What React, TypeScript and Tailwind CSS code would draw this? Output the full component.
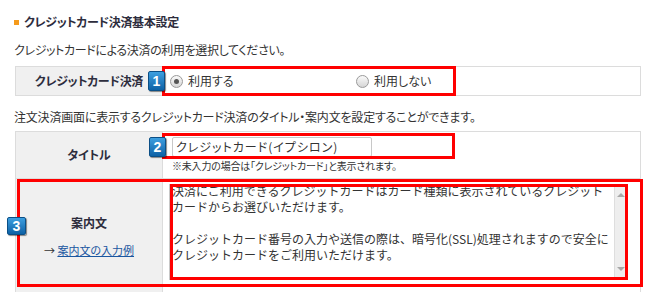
import React from 'react';

function Badge({ n, className }: { n: string; className: string }) {
  return (
    <div
      className={`absolute flex items-center justify-center rounded-[2px] border border-[#0b4f86] bg-gradient-to-b from-[#3d9fe0] to-[#0c62a6] text-[14px] leading-none font-bold text-white shadow-[1px_1px_1px_rgba(0,0,0,0.45)] font-['Liberation_Sans',sans-serif] ${className}`}
    >
      {n}
    </div>
  );
}

function Radio({ checked }: { checked?: boolean }) {
  return (
    <span className="flex h-[13px] w-[13px] items-center justify-center rounded-full border border-[#9a9a9a] bg-gradient-to-b from-[#fafafa] to-[#d6d6d6]">
      {checked && <span className="h-[5px] w-[5px] rounded-full bg-[#555]" />}
    </span>
  );
}

export default function App() {
  return (
    <div className="relative h-[292px] w-[656px] overflow-hidden bg-white text-[#333] font-['Noto_Sans_CJK_JP',sans-serif] [font-feature-settings:'palt']">
      {/* 見出し */}
      <div className="flex items-center pl-[14px] pt-[14px] leading-[16px]">
        <span className="h-[5px] w-[5px] bg-[#f59a1b]" />
        <span className="ml-[5px] text-[12px] font-bold tracking-[-0.3px] text-[#2d2d3d]">クレジットカード決済基本設定</span>
      </div>

      <p className="mt-[12px] pl-[14px] text-[12px] leading-[16px] tracking-[-0.35px]">クレジットカードによる決済の利用を選択してください。</p>

      {/* 決済利用 */}
      <div className="mx-[15px] mt-[8px] flex h-[30px] border border-[#dcdcdc] text-[12px]">
        <div className="flex w-[147px] items-center justify-center border-r border-[#dcdcdc] bg-[#f0f0f0] font-bold tracking-[-0.3px] text-[#2d2d3d]">
          クレジットカード決済
        </div>
        <div className="flex items-center pl-[7px]">
          <label className="flex w-[186px] items-center gap-[5px]">
            <Radio checked />
            <span>利用する</span>
          </label>
          <label className="flex items-center gap-[5px]">
            <Radio />
            <span>利用しない</span>
          </label>
        </div>
      </div>

      <p className="mt-[13px] pl-[14px] text-[12px] leading-[16px] tracking-[-0.2px]">
        注文決済画面に表示するクレジットカード決済のタイトル・案内文を設定することができます。
      </p>

      {/* タイトル・案内文 */}
      <div className="mx-[15px] mt-[6px] border border-[#dcdcdc] text-[12px]">
        <div className="flex h-[46px]">
          <div className="flex w-[147px] items-center justify-center border-r border-[#dcdcdc] bg-[#f0f0f0] font-bold text-[#2d2d3d]">
            タイトル
          </div>
          <div className="pl-[9px] pt-[5px]">
            <div className="flex h-[20px] w-[200px] items-center rounded-[2px] border border-[#c8c8c8] px-[3px] text-[12px] leading-none tracking-[1px]">
              クレジットカード(イプシロン)
            </div>
            <p className="mt-[2px] text-[10px] leading-[14px] tracking-[-0.2px]">※未入力の場合は「クレジットカード」と表示されます。</p>
          </div>
        </div>
        <div className="flex h-[130px] border-t border-[#dcdcdc]">
          <div className="flex w-[147px] flex-col items-center border-r border-[#dcdcdc] bg-[#f0f0f0] pt-[36px]">
            <span className="font-bold leading-[16px] text-[#2d2d3d]">案内文</span>
            <span className="mt-[11px] text-[11px] leading-[16px]">
              → <a className="text-[#1a56a0] underline">案内文の入力例</a>
            </span>
          </div>
          <div className="pl-[6px] pt-[5px]">
            <div className="flex h-[96px] w-[458px] border border-[#c8c8c8] [font-feature-settings:normal]">
              <div className="-mt-[2px] flex-1 pl-[2px] text-[12px] leading-[16px]">
                <p>決済にご利用できるクレジットカードはカード種類に表示されているクレジット</p>
                <p>カードからお選びいただけます。</p>
                <p>&nbsp;</p>
                <p>クレジットカード番号の入力や送信の際は、暗号化(SSL)処理されますので安全に</p>
                <p>クレジットカードをご利用いただけます。</p>
              </div>
              <div className="flex w-[12px] flex-col items-center justify-between border-l border-[#dedede] bg-[#eeeeee] py-[8px]">
                <span className="h-0 w-0 border-x-[4px] border-b-[4px] border-x-transparent border-b-[#a8a8a8]" />
                <span className="h-0 w-0 border-x-[4px] border-t-[4px] border-x-transparent border-t-[#a8a8a8]" />
              </div>
            </div>
          </div>
        </div>
      </div>

      {/* 注釈 */}
      <div className="absolute left-[162px] top-[66px] h-[30px] w-[294px] border-[3px] border-[#ff0000]" />
      <div className="absolute left-[162px] top-[133px] h-[26px] w-[293px] border-[3px] border-[#ff0000]" />
      <div className="absolute left-[17px] top-[179px] h-[108px] w-[626px] border-[3px] border-[#ff0000]" />
      <div className="absolute left-[170px] top-[184px] h-[96px] w-[458px] border-[3px] border-[#ff0000]" />
      <Badge n="1" className="left-[148px] top-[71px] h-[20px] w-[17px]" />
      <Badge n="2" className="left-[149px] top-[137px] h-[20px] w-[17px]" />
      <Badge n="3" className="left-[7px] top-[217px] h-[18px] w-[19px]" />
    </div>
  );
}
